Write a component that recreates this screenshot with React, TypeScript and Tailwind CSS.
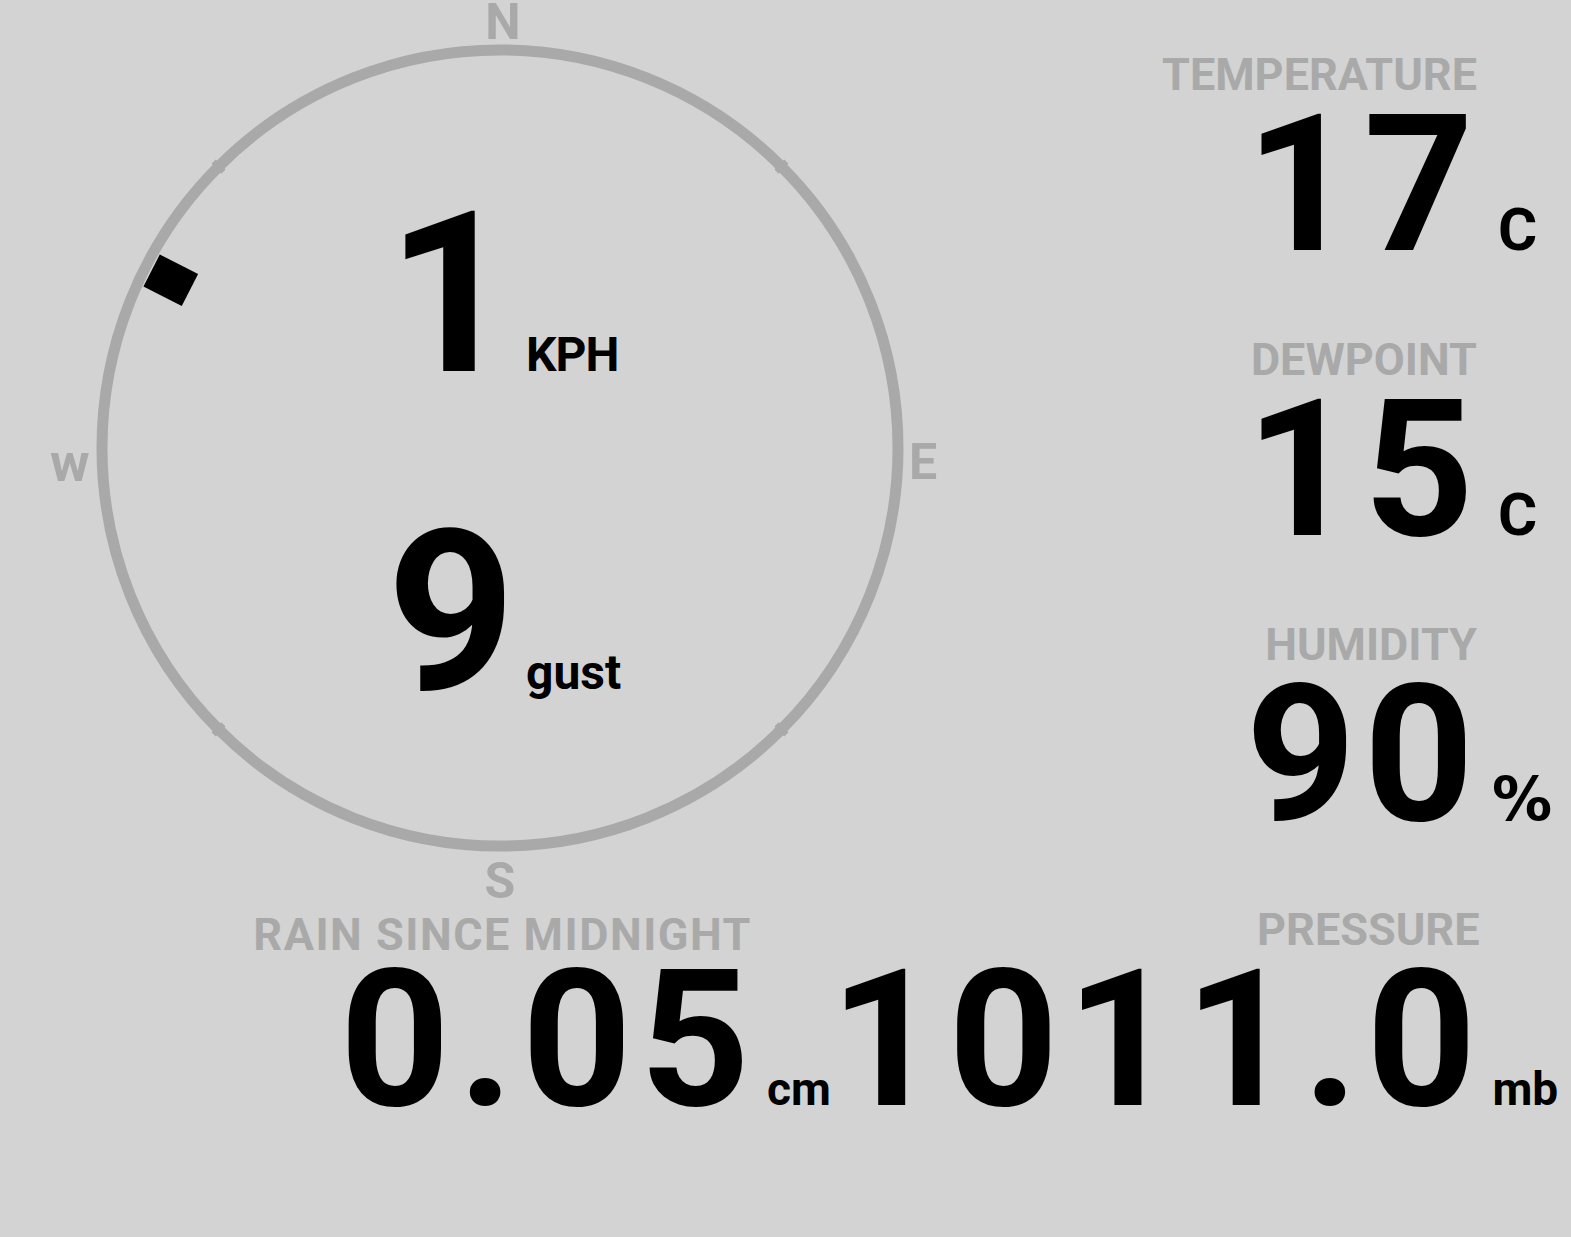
import React from "react";

function Stat({
  label,
  value,
  unit,
  unitClass,
}: {
  label: string;
  value: string;
  unit: string;
  unitClass: string;
}) {
  return (
    <div className="grid grid-cols-[1fr_97px] items-baseline gap-y-2">
      <div className="text-right text-[45px] leading-[45px] font-bold text-[#a9a9a9] whitespace-nowrap -mr-[3px]">
        {label}
      </div>
      <div />
      <div className="text-right text-[192px] leading-[160px] font-bold text-black whitespace-nowrap tracking-[8px] -mr-[8px]">
        {value}
      </div>
      <div className={`font-bold text-black leading-none whitespace-nowrap ${unitClass}`}>{unit}</div>
    </div>
  );
}

function Compass() {
  const cx = 500;
  const cy = 448;
  return (
    <div className="relative w-[1000px] h-[907px] shrink-0">
      <svg className="absolute inset-0" width={1000} height={907} viewBox="0 0 1000 907">
        <circle cx={cx} cy={cy} r={398} fill="none" stroke="#a9a9a9" strokeWidth={11} />
        {[45, 135, 225, 315].map((a) => (
          <g key={a} transform={`translate(${cx} ${cy}) rotate(${a})`}>
            <rect x={-3} y={-405} width={6} height={14} fill="#a9a9a9" />
          </g>
        ))}
        <g transform={`translate(${cx} ${cy}) rotate(297)`}>
          <rect x={-18} y={-391} width={36} height={43} fill="#000" />
        </g>
      </svg>
      <div className="absolute left-[503px] top-[2px] -translate-x-1/2 text-[50px] leading-[40px] font-bold text-[#a9a9a9]">
        N
      </div>
      <div className="absolute left-[500px] top-[856px] -translate-x-1/2 text-[50px] leading-none font-bold text-[#a9a9a9]">
        S
      </div>
      <div className="absolute left-[909px] top-[437px] text-[50px] leading-none font-bold text-[#a9a9a9]">
        E
      </div>
      <div className="absolute left-[50px] top-[436px] text-[54px] leading-none font-bold text-[#a9a9a9]">
        w
      </div>
      <div className="relative pt-[183px] ml-[387px] w-max grid grid-cols-[125px_auto] gap-x-[14px] gap-y-[94px] items-baseline">
        <div className="text-right text-[224px] leading-none font-bold text-black">1</div>
        <div className="text-[48px] leading-none font-bold text-black tracking-[-1px]">KPH</div>
        <div className="text-right text-[224px] leading-none font-bold text-black">9</div>
        <div className="text-[48px] leading-none font-bold text-black">gust</div>
      </div>
    </div>
  );
}

export default function App() {
  return (
    <div className="w-[1571px] h-[1237px] bg-[#d3d3d3] overflow-hidden flex flex-col [font-family:Roboto,'Liberation_Sans',sans-serif]">
      <div className="flex h-[907px]">
        <Compass />
        <div className="flex-1 pt-[52px] flex flex-col gap-[72px]">
          <Stat label="TEMPERATURE" value="17" unit="C" unitClass="pl-[24px] text-[60px]" />
          <Stat label="DEWPOINT" value="15" unit="C" unitClass="pl-[24px] text-[60px]" />
          <Stat
            label="HUMIDITY"
            value="90"
            unit="%"
            unitClass="pl-[18px] text-[60px] [font-family:'DejaVu_Sans',sans-serif]"
          />
        </div>
      </div>
      <div className="flex">
        <div className="w-[830px] shrink-0 pt-[5px]">
          <div className="grid grid-cols-[1fr_80px] items-baseline gap-y-[3px]">
            <div className="text-right text-[45px] leading-[45px] font-bold text-[#a9a9a9] whitespace-nowrap tracking-[1.5px] -mr-[2px]">
              RAIN SINCE MIDNIGHT
            </div>
            <div />
            <div className="text-right text-[192px] leading-[160px] font-bold text-black whitespace-nowrap tracking-[8px] -mr-[8px]">
              0.05
            </div>
            <div className="pl-[17px] text-[46px] leading-none font-bold text-black">cm</div>
          </div>
        </div>
        <div className="flex-1 min-w-0">
          <Stat label="PRESSURE" value="1011.0" unit="mb" unitClass="pl-4 text-[46px]" />
        </div>
      </div>
    </div>
  );
}
